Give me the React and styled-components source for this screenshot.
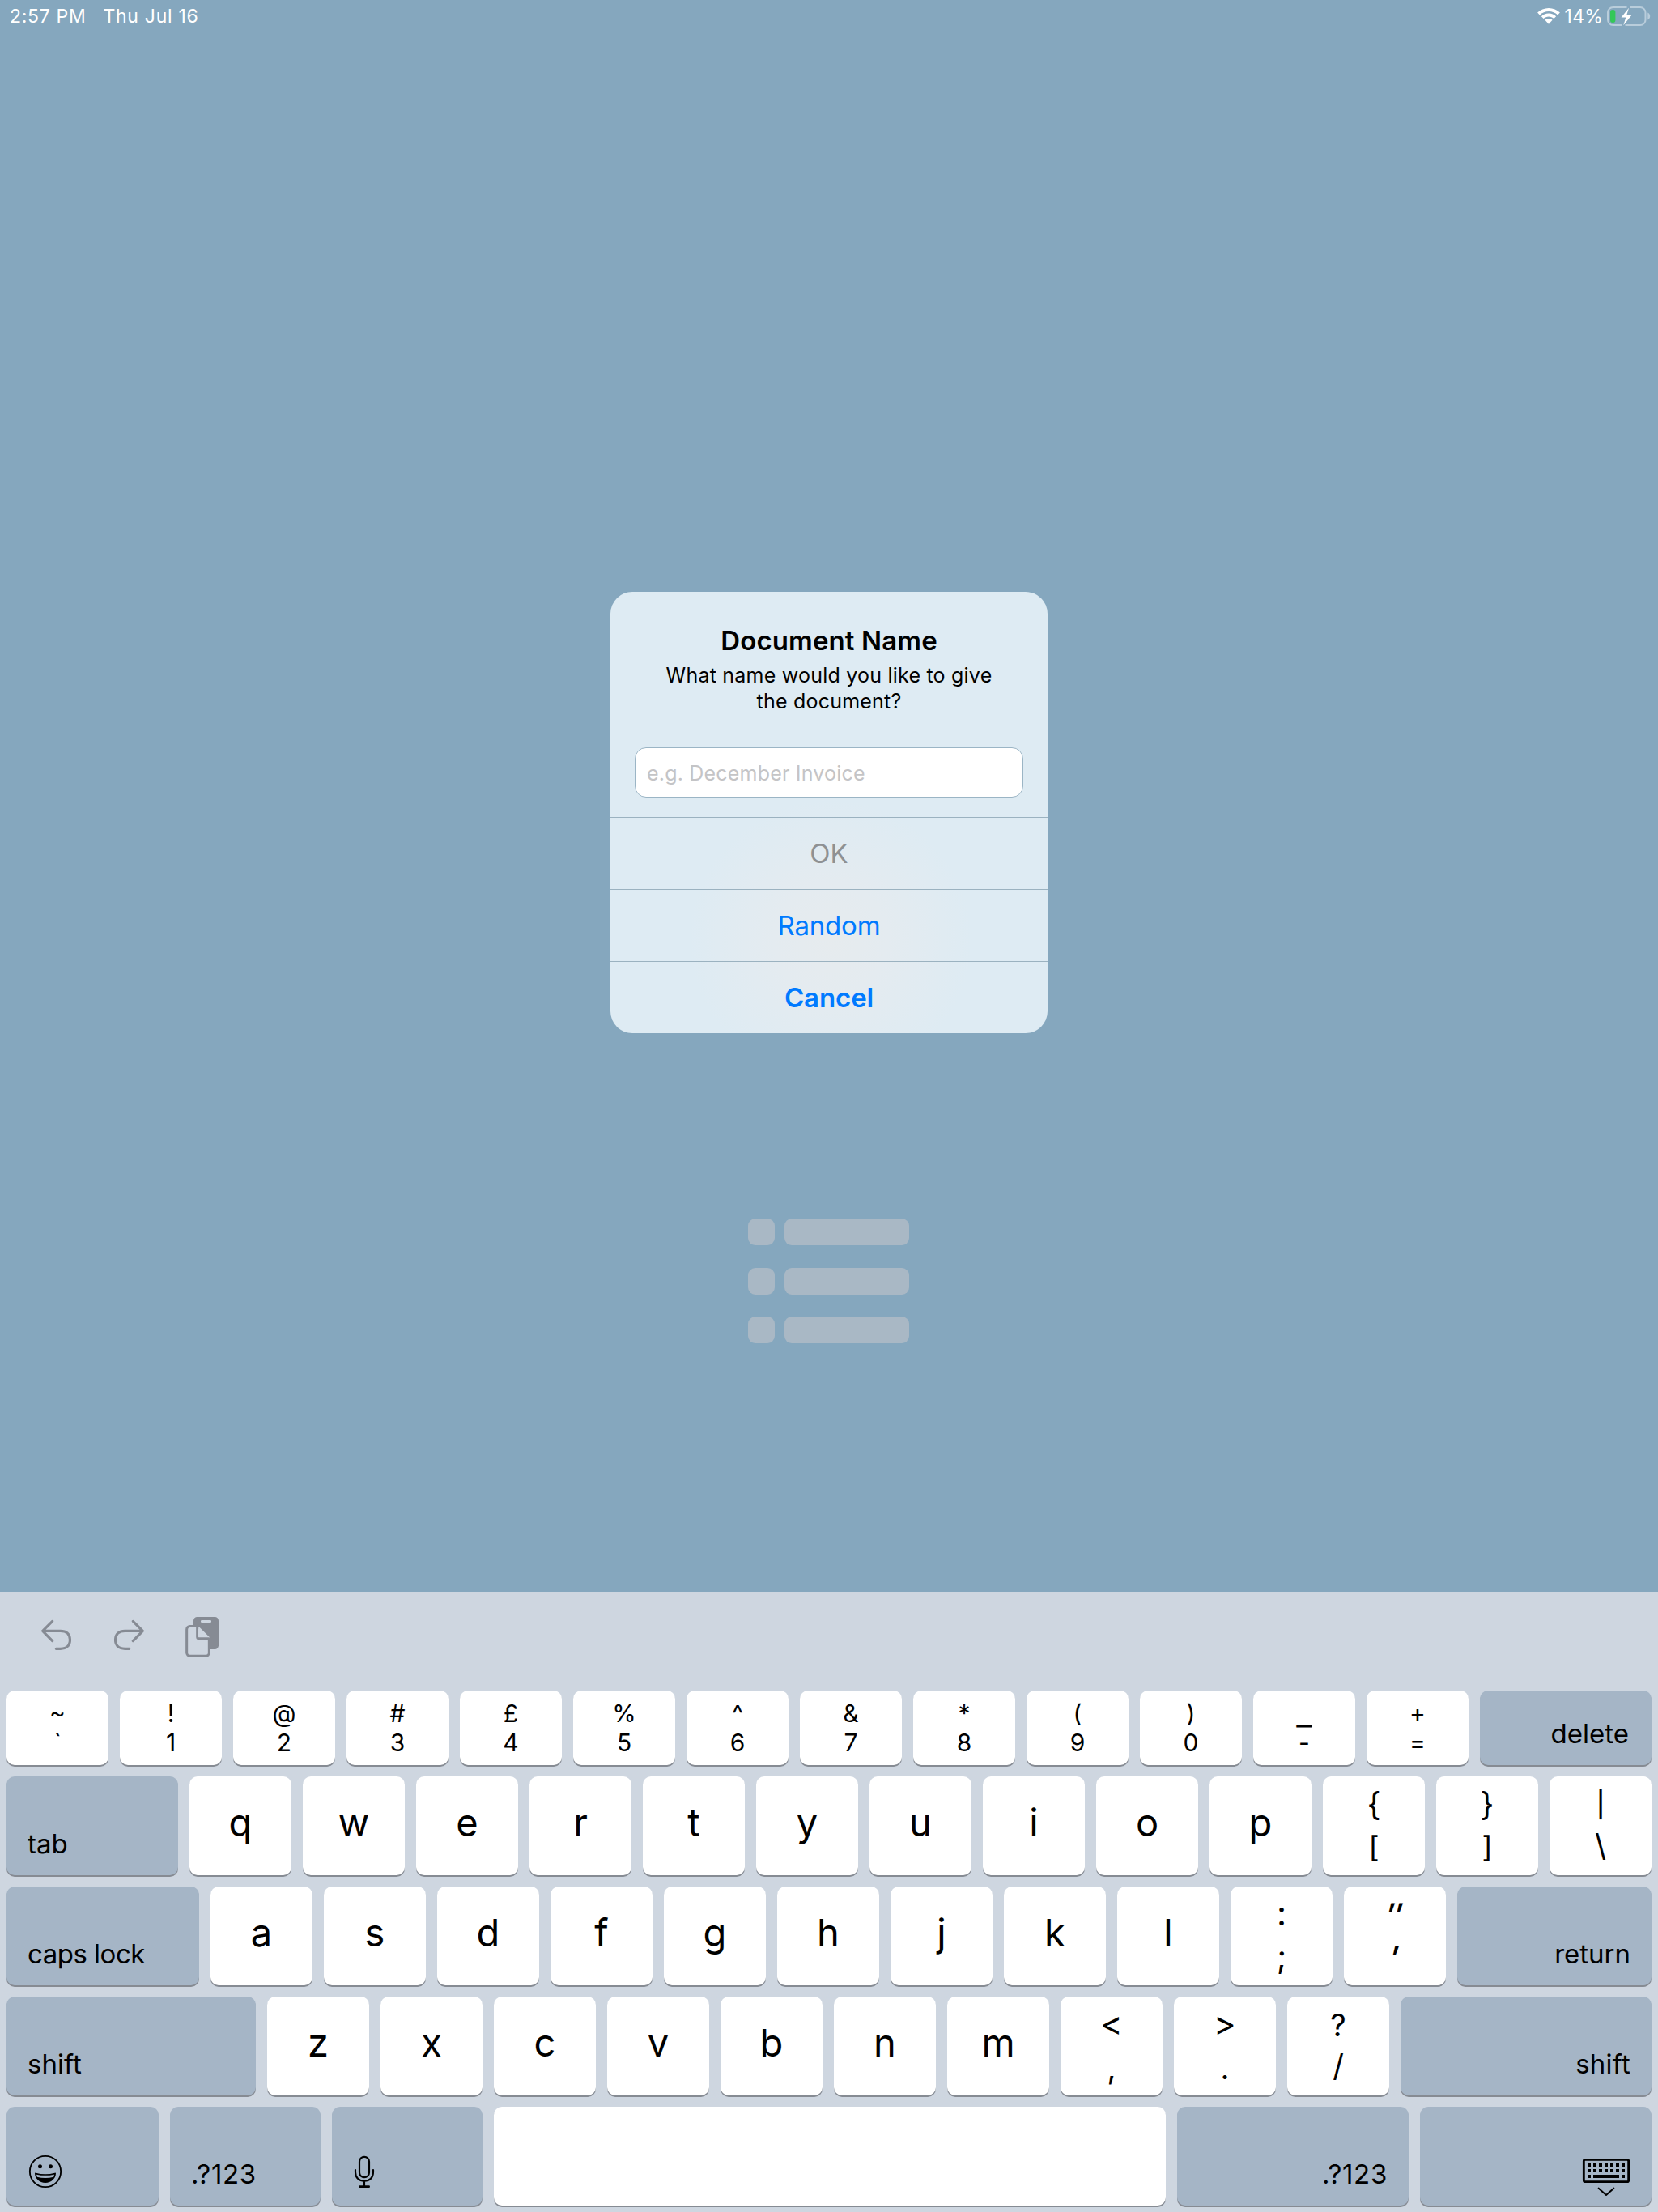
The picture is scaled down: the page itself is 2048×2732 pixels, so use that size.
import React from "react";
import styled, { createGlobalStyle } from "styled-components";

const Global = createGlobalStyle`
  * { box-sizing: border-box; }
  html, body { margin: 0; padding: 0; }
  body { font-family: Inter, "Liberation Sans", sans-serif; background: #85a7be; }
`;

const Screen = styled.div`
  width: 2048px;
  height: 2732px;
  display: flex;
  flex-direction: column;
  background: #85a7be;
  overflow: hidden;
`;

const StatusBar = styled.header`
  flex: none;
  height: 40px;
  display: flex;
  justify-content: space-between;
  padding: 0 9px 0 12px;
  color: #fff;
  font-size: 23px;
  font-weight: 420;
  line-height: 40px;
`;

const StatusGroup = styled.div`
  display: flex;
  gap: ${(p) => p.$gap}px;
  white-space: pre;
`;

const StatusText = styled.span`
  letter-spacing: ${(p) => p.$track || 0}px;
`;

const StatusIcon = styled.svg`
  display: block;
  flex: none;
  margin-top: ${(p) => p.$top}px;
`;

const Stage = styled.main`
  flex: none;
  height: 1926px;
  display: flex;
  flex-direction: column;
  align-items: center;
  padding-top: 691px;
`;

const Alert = styled.section`
  width: 540px;
  height: 545px;
  border-radius: 27px;
  overflow: hidden;
  background: radial-gradient(circle 175px at 272px 430px, #e6ebee 0%, #e4ebf0 40%, #deebf300 100%), #deebf3;
`;

const AlertBody = styled.div`
  height: 278px;
  padding: 39px 30px 0;
  text-align: center;
  color: #000;
`;

const AlertTitle = styled.h1`
  margin: 0;
  font-size: 33px;
  font-weight: 600;
  line-height: 43px;
  letter-spacing: ${(p) => p.$track}px;
`;

const AlertMessage = styled.p`
  margin: 5px 0 0;
  font-size: 25px;
  line-height: 32px;
  letter-spacing: ${(p) => p.$track}px;
`;

const Field = styled.div`
  height: 62px;
  margin-top: 41px;
  padding-left: 14px;
  border: 1px solid #9bb5c5;
  border-radius: 14px;
  background: #fff;
  color: #c4c4c6;
  font-size: 25px;
  line-height: 62px;
  text-align: left;
  letter-spacing: ${(p) => p.$track}px;
`;

const AlertButton = styled.div`
  height: 89px;
  border-top: 1px solid #9bb2c0;
  color: ${(p) => p.$color || "#007aff"};
  font-size: 33px;
  font-weight: ${(p) => (p.$strong ? 600 : 400)};
  line-height: 88px;
  text-align: center;
  letter-spacing: ${(p) => p.$track || 0}px;
`;

const List = styled.div`
  width: 200px;
  margin-top: 229px;
  display: grid;
  grid-template-columns: 33px 154px;
  grid-auto-rows: 33px;
  gap: 27.5px 12px;
`;

const ListBlock = styled.span`
  border-radius: 9px;
  background: #a9b8c5;
`;

const Keyboard = styled.section`
  flex: none;
  height: 766px;
  background: #ced6e0;
`;

const Toolbar = styled.div`
  height: 122px;
  padding: 31px 0 0 50px;
  display: flex;
  gap: 50px;
  align-items: flex-start;
  color: #868b94;
`;

const Rows = styled.div`
  display: flex;
  flex-direction: column;
  gap: 14px;
  padding: 0 8px;
`;

const Row = styled.div`
  display: flex;
  gap: 14px;
  height: ${(p) => (p.$short ? 92 : 122)}px;
`;

const KeyBase = styled.div`
  flex: none;
  width: ${(p) => p.$w || 126}px;
  height: 100%;
  border-radius: 10px;
  background: #fff;
  box-shadow: 0 2px 0 #868b93;
  color: #000;
`;

const LetterKey = styled(KeyBase)`
  font-size: 47px;
  line-height: 113px;
  text-align: center;
`;

const DualKey = styled(KeyBase)`
  display: flex;
  flex-direction: column;
  align-items: center;
  padding-top: ${(p) => (p.$short ? 10 : 9)}px;
  font-size: ${(p) => (p.$short ? 30 : 38)}px;
  line-height: ${(p) => (p.$short ? 36 : 53)}px;
`;

const Glyph = styled.span`
  display: block;
  font-size: ${(p) => (p.$size ? `${p.$size}px` : "inherit")};
  font-weight: ${(p) => p.$weight || 400};
  transform: translateY(${(p) => p.$shift || 0}px) scaleX(${(p) => p.$stretch || 1}) skewX(${(p) => p.$slant || 0}deg);
`;

const ModifierKey = styled(KeyBase)`
  display: flex;
  align-items: flex-end;
  justify-content: ${(p) => (p.$right ? "flex-end" : "flex-start")};
  padding: 0 ${(p) => p.$inset || 26}px 19px;
  background: #a5b5c6;
  font-size: 33px;
  line-height: 40px;
  letter-spacing: ${(p) => p.$track || 0}px;
`;

const KeyboardGlyph = styled.svg`
  display: block;
  margin-bottom: -9px;
`;

const Wifi = () => (
  <StatusIcon $top={9} width="30" height="22" viewBox="0 0 30 22" fill="#fff">
    <path d="M15 1C9.600 1 4.700 3.100 1.100 6.500L3.900 9.400C6.800 6.700 10.700 5 15 5s8.200 1.700 11.100 4.400l2.800-2.900C25.300 3.100 20.400 1 15 1Z" />
    <path d="M15 7.600c-3.500 0-6.700 1.400-9.100 3.600l2.700 2.800c1.700-1.600 3.900-2.600 6.400-2.600s4.700 1 6.400 2.600l2.700-2.800c-2.400-2.200-5.600-3.600-9.100-3.600Z" />
    <path d="M15 14c-1.800 0-3.400.7-4.600 1.800L15 20.800l4.600-5C18.400 14.700 16.800 14 15 14Z" />
  </StatusIcon>
);

const Battery = () => (
  <StatusIcon $top={8} width="54" height="24" viewBox="0 0 54 24">
    <path
      d="M24.500 1H7.500a6.500 6.500 0 0 0-6.500 6.500v9A6.500 6.500 0 0 0 7.500 23h11M29 1h12a6.500 6.500 0 0 1 6.500 6.500v9A6.500 6.500 0 0 1 41 23H22.500"
      fill="none" stroke="#b9cddb" strokeWidth="2"
    />
    <path d="M50.300 7.500c1.700.8 2.900 2.500 2.900 4.500s-1.200 3.700-2.900 4.500Z" fill="#b9cddb" />
    <rect x="4" y="4" width="6.400" height="16" rx="3" fill="#34c759" />
    <path d="M27 1.800 17.600 13.500h5.700L20.300 23.200 30.400 10.700h-6.200Z" fill="#fff" />
  </StatusIcon>
);

const UndoIcon = () => (
  <svg width="40" height="50" viewBox="30 36 120 150" fill="none" stroke="currentColor" strokeWidth="9.500" strokeLinecap="round" strokeLinejoin="round">
    <path d="M74 52 38 88l36 37M38 88h66c22 0 35.500 12 35.500 33s-13.500 33-35.500 33H88" />
  </svg>
);

const RedoIcon = () => (
  <svg width="38" height="50" viewBox="300 36 114 150" fill="none" stroke="currentColor" strokeWidth="9.500" strokeLinecap="round" strokeLinejoin="round">
    <path d="m373 52 36 36-36 37M409 88h-66c-22 0-35.500 12-35.500 33s13.500 33 35.500 33h16" />
  </svg>
);

const PasteIcon = () => (
  <svg width="43" height="50" viewBox="564 36 129 150">
    <path
      d="M611 36h65a14 14 0 0 1 14 14v92a14 14 0 0 1-14 14H657V112L617 72H597V50a14 14 0 0 1 14-14Z"
      fill="currentColor"
    />
    <rect x="624" y="48" width="39" height="9" rx="4" fill="#ced6e0" />
    <path
      d="M611 70.500H584a12 12 0 0 0-12 12V169a12 12 0 0 0 12 12h59a12 12 0 0 0 12-12V116H617a6 6 0 0 1-6-6Z"
      fill="#ced6e0" stroke="currentColor" strokeWidth="9" strokeLinejoin="round"
    />
    <path d="M615 79v31.500h31.500Z" fill="#ced6e0" />
  </svg>
);

const SmileyIcon = () => (
  <svg width="44" height="44" viewBox="42 63 132 132">
    <circle cx="108" cy="126" r="57.500" fill="none" stroke="#000" strokeWidth="5.500" />
    <circle cx="88.500" cy="107" r="7.500" />
    <circle cx="127.500" cy="107" r="7.500" />
    <path d="M69 133q0-3 4-2 35 9 70 0 4-1 4 2c-1 20-17 35-39 35s-38-15-39-35Z" />
    <path d="M75 137q33 7 66 0l-2.500 9.500q-30.500 7-61 0Z" fill="#a5b5c6" />
  </svg>
);

const MicIcon = () => (
  <svg width="28" height="44" viewBox="1248 63 84 132" fill="none" stroke="#000" strokeWidth="6.500" strokeLinecap="round">
    <rect x="1272" y="71.500" width="36" height="76" rx="18" />
    <path d="M1257 120v8c0 20 13 33 33 33s33-13 33-33v-8M1290 161v20" />
    <path d="M1273 182h34" strokeWidth="8" />
  </svg>
);

const HideKeyboardIcon = () => (
  <KeyboardGlyph width="60" height="49" viewBox="39 45 180 147">
    <rect x="46" y="52" width="166" height="82" rx="5" fill="none" stroke="#000" strokeWidth="8.500" />
    {[60, 81, 102, 123, 144, 165, 186].map((x) => (
      <React.Fragment key={x}>
        <rect x={x} y="66" width="12" height="12" />
        <rect x={x} y="87" width="12" height="12" />
      </React.Fragment>
    ))}
    <rect x="60" y="108" width="12" height="12" />
    <rect x="81" y="108" width="96" height="12" />
    <rect x="186" y="108" width="12" height="12" />
    <path d="m101 158 28 25 28-25" fill="none" stroke="#000" strokeWidth="6" strokeLinecap="round" strokeLinejoin="round" />
  </KeyboardGlyph>
);

const numberKeys = [
  ["~", "`"], ["!", "1"], ["@", "2"], ["#", "3"], ["£", "4"], ["%", "5"], ["^", "6"],
  ["&", "7"], ["*", "8"], ["(", "9"], [")", "0"], ["_", "-"], ["+", "="],
];

const glyphTuning = {
  _: { $shift: 4, $stretch: 1.4 },
  "{": { $size: 40, $shift: -1 },
  "}": { $size: 40, $shift: -1 },
  "[": { $size: 36, $shift: -1 },
  "]": { $size: 36, $shift: -1 },
  "|": { $size: 31, $weight: 500, $shift: -1 },
  "\\": { $size: 38, $shift: -3 },
  "/": { $size: 38, $shift: -3 },
  ":": { $size: 42, $shift: -3 },
  ";": { $size: 40, $shift: -2 },
  "″": { $size: 42, $weight: 500, $slant: -8 },
  "′": { $size: 42, $weight: 500, $slant: -8 },
  "<": { $size: 42, $shift: -3 },
  ">": { $size: 42, $shift: -3 },
  "~": { $shift: -1 },
};

const Dual = ({ pair, short }) => (
  <DualKey $short={short}>
    {pair.map((c) => <Glyph key={c} {...glyphTuning[c]}>{c}</Glyph>)}
  </DualKey>
);

const Letters = ({ text }) => text.split("").map((c) => <LetterKey key={c}>{c}</LetterKey>);

export default function App() {
  return (
    <Screen>
      <Global />
      <StatusBar>
        <StatusGroup $gap={21}>
          <StatusText $track={0.7}>2:57 PM</StatusText>
          <StatusText $track={0.7}>Thu Jul 16</StatusText>
        </StatusGroup>
        <StatusGroup $gap={5}>
          <Wifi />
          <StatusText $track={0.2}>14%</StatusText>
          <Battery />
        </StatusGroup>
      </StatusBar>
      <Stage>
        <Alert>
          <AlertBody>
            <AlertTitle $track={0.12}>Document Name</AlertTitle>
            <AlertMessage $track={0.22}>What name would you like to give<br />the document?</AlertMessage>
            <Field $track={0.2}>e.g. December Invoice</Field>
          </AlertBody>
          <AlertButton $color="#8f9193">OK</AlertButton>
          <AlertButton $track={-0.2}>Random</AlertButton>
          <AlertButton $strong $track={-0.1}>Cancel</AlertButton>
        </Alert>
        <List>
          {[0, 1, 2].map((i) => (
            <React.Fragment key={i}>
              <ListBlock />
              <ListBlock />
            </React.Fragment>
          ))}
        </List>
      </Stage>
      <Keyboard>
        <Toolbar>
          <UndoIcon />
          <RedoIcon />
          <PasteIcon />
        </Toolbar>
        <Rows>
          <Row $short>
            {numberKeys.map((pair) => <Dual key={pair[1]} pair={pair} short />)}
            <ModifierKey $w={212} $right $inset={28}>delete</ModifierKey>
          </Row>
          <Row>
            <ModifierKey $w={212}>tab</ModifierKey>
            <Letters text="qwertyuiop" />
            <Dual pair={["{", "["]} />
            <Dual pair={["}", "]"]} />
            <Dual pair={["|", "\\"]} />
          </Row>
          <Row>
            <ModifierKey $w={238} $track={-0.5}>caps lock</ModifierKey>
            <Letters text="asdfghjkl" />
            <Dual pair={[":", ";"]} />
            <Dual pair={["″", "′"]} />
            <ModifierKey $w={240} $right>return</ModifierKey>
          </Row>
          <Row>
            <ModifierKey $w={308}>shift</ModifierKey>
            <Letters text="zxcvbnm" />
            <Dual pair={["<", ","]} />
            <Dual pair={[">", "."]} />
            <Dual pair={["?", "/"]} />
            <ModifierKey $w={310} $right $track={0.2}>shift</ModifierKey>
          </Row>
          <Row>
            <ModifierKey $w={188}><SmileyIcon /></ModifierKey>
            <ModifierKey $w={186} $track={0.7}>.?123</ModifierKey>
            <ModifierKey $w={186}><MicIcon /></ModifierKey>
            <KeyBase $w={830} />
            <ModifierKey $w={286} $right $track={0.7}>.?123</ModifierKey>
            <ModifierKey $w={286} $right><HideKeyboardIcon /></ModifierKey>
          </Row>
        </Rows>
      </Keyboard>
    </Screen>
  );
}
